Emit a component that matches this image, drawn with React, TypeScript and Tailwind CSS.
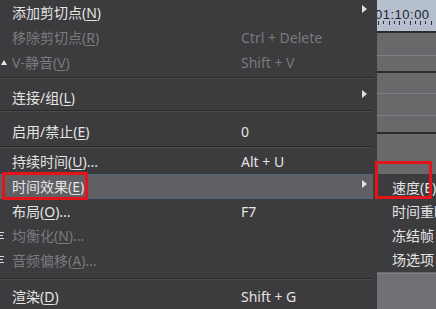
import React from "react"

type Item = {
  label: string
  key?: string
  after?: string
  shortcut?: string
  disabled?: boolean
  arrow?: boolean
  active?: boolean
  icon?: "tri" | "bars"
}

const rows: (Item | { sep: string })[] = [
  { label: "添加剪切点", key: "N", arrow: true },
  { label: "移除剪切点", key: "R", shortcut: "Ctrl + Delete", disabled: true },
  { label: "V-静音", key: "V", shortcut: "Shift + V", disabled: true, icon: "tri" },
  { sep: "h-[11px] pt-[3px]" },
  { label: "连接/组", key: "L", arrow: true },
  { sep: "h-[9px] pt-[0px]" },
  { label: "启用/禁止", key: "E", shortcut: "0" },
  { sep: "h-[5px] pt-[2px]" },
  { label: "持续时间", key: "U", after: "...", shortcut: "Alt + U" },
  { label: "时间效果", key: "E", arrow: true, active: true },
  { label: "布局", key: "O", after: "...", shortcut: "F7" },
  { label: "均衡化", key: "N", after: "...", disabled: true, icon: "bars" },
  { label: "音频偏移", key: "A", after: "...", disabled: true, icon: "bars" },
  { sep: "h-[11px] pt-[5px]" },
  { label: "渲染", key: "D", shortcut: "Shift + G" },
]

const subItems = ["速度(E)", "时间重映射", "冻结帧", "场选项"]

const font = { fontFamily: '"Noto Sans", "Noto Sans CJK SC", sans-serif' }

function Row({ item }: { item: Item }) {
  const text = item.disabled ? "text-[#7b7a7d]" : "text-[#e4e4e4]"
  return (
    <div
      className={`relative flex items-center h-[25px] ${
        item.active ? "bg-[#605f63] border-y border-[#55637f]" : ""
      }`}
    >
      {item.icon === "tri" && (
        <span className="absolute left-[1px] top-[10px] w-0 h-0 border-x-[3px] border-x-transparent border-b-[5px] border-b-[#e8e8e8]" />
      )}
      {item.icon === "bars" && (
        <span className="absolute left-0 top-[8px] flex flex-col gap-[2px]">
          <span className="w-[4px] h-[1px] bg-[#d8d8d8]" />
          <span className="w-[3px] h-[1px] bg-[#d8d8d8]" />
          <span className="w-[4px] h-[1px] bg-[#d8d8d8]" />
        </span>
      )}
      <span className={`pl-[12px] w-[241px] text-[14px] whitespace-nowrap ${text}`}>
        {item.label}(<u className="underline-offset-2">{item.key}</u>){item.after}
      </span>
      {item.shortcut && (
        <span className={`text-[14px] whitespace-nowrap ${text}`}>{item.shortcut}</span>
      )}
      {item.arrow && (
        <span className="absolute left-[362px] top-[5px] w-0 h-0 border-y-[4px] border-y-transparent border-l-[5px] border-l-[#e0e0e0]" />
      )}
    </div>
  )
}

export default function App() {
  return (
    <div className="relative flex w-[436px] h-[309px] overflow-hidden bg-[#3c3b3d]" style={font}>
      {/* main context menu */}
      <div className="w-[377px] flex flex-col bg-[#3c3b3d] pr-[4px] z-10">
        {rows.map((r, i) =>
          "sep" in r ? (
            <div key={i} className={r.sep}>
              <div className="h-[1px] bg-[#2a292b]" />
              <div className="h-[1px] bg-[#4a494c]" />
            </div>
          ) : (
            <Row key={i} item={r} />
          )
        )}
      </div>

      {/* timeline behind */}
      <div className="flex-1 flex flex-col">
        <div className="h-[31px] bg-[#b6bfcd] relative">
          <span className="absolute left-[-2px] top-[5px] text-[13px] text-[#1f2230] tracking-[0.5px]" style={{ fontFamily: '"Liberation Sans", sans-serif' }}>
            01:10:00
          </span>
          <div className="absolute left-0 right-0 top-[21px] flex gap-[5px] pl-[1px]">
            {Array.from({ length: 12 }).map((_, i) => (
              <span key={i} className={`w-[1px] bg-[#2b2e3a] ${i % 2 ? "h-[3px]" : "h-[4px]"}`} />
            ))}
          </div>
        </div>
        <div className="h-[2px] bg-[#2b2a2c]" />
        <div className="h-[22px] bg-[#69686b]" />
        <div className="h-[1px] bg-[#7f7e82]" />
        <div className="h-[15px] bg-[#69686b]" />
        <div className="h-[2px] bg-[#2b2a2c]" />
        <div className="h-[20px] bg-[#69686b]" />
        <div className="h-[1px] bg-[#7f7e82]" />
        <div className="h-[21px] bg-[#69686b]" />
        <div className="h-[1px] bg-[#7f7e82]" />
        <div className="h-[16px] bg-[#69686b]" />
        <div className="h-[2px] bg-[#2b2a2c]" />
        <div className="h-[139px] bg-[#69686b]" />
        <div className="h-[1px] bg-[#828185]" />
        <div className="flex-1 bg-[#717074]" />
      </div>

      {/* submenu */}
      <div className="absolute left-[377px] top-[174px] w-[70px] h-[98px] bg-[#3c3b3d] pt-[1px] z-20">
        {subItems.map((s) => (
          <div key={s} className="h-[24px] flex items-center pl-[15px] text-[14px] text-[#e4e4e4] whitespace-nowrap">
            {s}
          </div>
        ))}
      </div>

      {/* red annotation boxes */}
      <div className="absolute left-[2px] top-[172px] w-[86px] h-[28px] border-[3px] border-[#e3141c] z-30" />
      <div className="absolute left-[375px] top-[161px] w-[57px] h-[38px] border-[3px] border-[#e3141c] z-30" />
    </div>
  )
}
